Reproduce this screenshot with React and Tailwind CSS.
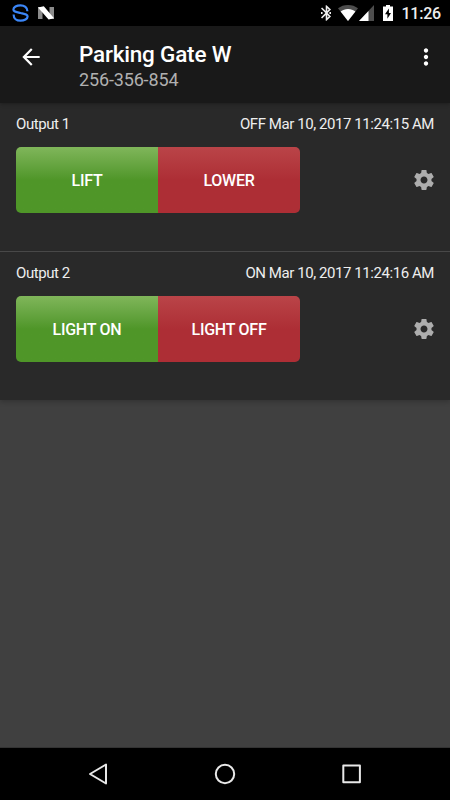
const outputs = [
  { name: "Output 1", status: "OFF Mar 10, 2017 11:24:15 AM", on: "LIFT", off: "LOWER" },
  { name: "Output 2", status: "ON Mar 10, 2017 11:24:16 AM", on: "LIGHT ON", off: "LIGHT OFF" },
];

function StatusBar() {
  return (
    <div className="flex h-[26px] shrink-0 items-center justify-between bg-black pr-[9px] pl-[12px]">
      <div className="flex items-center gap-[9px]">
        <svg viewBox="0 0 17 18" className="h-[18px] w-[17px]" fill="none" stroke="#3b86f7" strokeWidth="2.200">
          <path d="M15.400 7.200C15.400 3.600 12.400 1.300 8.500 1.300C4.600 1.300 1.400 3.200 1.400 5.600C1.400 7.600 4 7.900 8.500 9C13 10.100 15.600 10.400 15.600 12.400C15.600 14.800 12.400 16.700 8.500 16.700C4.600 16.700 1.600 14.400 1.600 10.400" />
        </svg>
        <svg viewBox="0 0 16 14" className="h-[14px] w-4">
          <path d="M0 1h4.500v12H0zM11.500 1H16v12h-4.500z" fill="#8b8b8b" />
          <path d="M0 1.400 5.800.3 16 12.200l-5.400 1.400z" fill="#fff" />
        </svg>
      </div>
      <div className="flex items-center">
        <svg viewBox="5 2 12.710 20" className="mr-[7px] h-[16px] w-[10px]" fill="#eee">
          <path d="M17.710 7.710 12 2h-1v7.590L6.410 5 5 6.410 10.590 12 5 17.590 6.410 19 11 14.410V22h1l5.710-5.710-4.300-4.290 4.300-4.290zM13 5.830l1.880 1.880L13 9.590V5.830zm1.880 10.460L13 18.170v-3.760l1.880 1.880z" />
          <path d="M5 10.700h2v2.600H5zM15.700 10.700h2v2.600h-2z" />
        </svg>
        <svg viewBox="0 0 20 16" className="mr-[1px] h-4 w-5">
          <path d="M10 16 0 3.300C2.700 1.200 6.200 0 10 0s7.300 1.200 10 3.300z" fill="#4d4d4d" />
          <path d="M10 16 2.600 6.600C4.700 5 7.200 4 10 4s5.300 1 7.400 2.600z" fill="#fff" />
        </svg>
        <svg viewBox="0 0 15 16" className="mr-[9px] h-4 w-[15px]">
          <path d="M0 16 15 0v16z" fill="#4d4d4d" />
          <path d="M0 16 9.500 5.900V16z" fill="#fff" />
        </svg>
        <svg viewBox="0 0 10 16" className="mr-[8px] h-4 w-[10px]">
          <path d="M3 0h4v1.500h3V16H0V1.500h3z" fill="#fff" />
          <path d="M5.900 3.500 2 9.300h2.400v4.500L8 7.900H5.900z" fill="#000" />
        </svg>
        <span className="pt-[2px] text-[16px] leading-none font-medium tracking-[-0.2px] text-[#eee]">11:26</span>
      </div>
    </div>
  );
}

function AppBar() {
  return (
    <header className="z-10 flex h-[77px] shrink-0 bg-[#191919] shadow-[0_1px_4px_rgba(0,0,0,0.3)]">
      <svg viewBox="0 0 24 24" className="mt-[18px] ml-[18px] h-[26px] w-[26px]" fill="#fff">
        <path d="M20 11H7.830l5.590-5.590L12 4l-8 8 8 8 1.410-1.410L7.830 13H20v-2z" />
      </svg>
      <div className="mt-[14px] ml-[35px] flex-1">
        <h1 className="text-[22.500px] leading-[28px] font-medium tracking-[-0.2px] text-white">Parking Gate W</h1>
        <p className="text-[18px] leading-[24px] tracking-[-0.15px] text-[#b0b0b0]">256-356-854</p>
      </div>
      <svg viewBox="0 0 24 24" className="mt-[18px] mr-[11px] h-[26px] w-[26px]" fill="#fff">
        <path d="M12 8c1.100 0 2-.9 2-2s-.9-2-2-2-2 .9-2 2 .9 2 2 2zm0 2c-1.100 0-2 .9-2 2s.9 2 2 2 2-.9 2-2-.9-2-2-2zm0 6c-1.100 0-2 .9-2 2s.9 2 2 2 2-.9 2-2-.9-2-2-2z" />
      </svg>
    </header>
  );
}

function OutputRow({ output }) {
  return (
    <section className="h-[149px] border-b border-[#484848] px-4 pt-[11px] last:border-b-0">
      <div className="flex justify-between text-[15px] leading-5 tracking-[-0.43px] text-[#eee]">
        <span>{output.name}</span>
        <span>{output.status}</span>
      </div>
      <div className="mt-[13px] flex items-center justify-between">
        <div className="flex h-[66px] w-[284px] overflow-hidden rounded-[5px] text-[16px] font-medium tracking-[-0.25px] text-white">
          <button type="button" className="flex-1 bg-linear-to-b from-[#80b65a] via-[#4f9628] via-50% to-[#4f9628] pt-[2px]">
            {output.on}
          </button>
          <button type="button" className="flex-1 bg-linear-to-b from-[#ba4448] via-[#ad2e35] via-50% to-[#ad2e35] pt-[2px]">
            {output.off}
          </button>
        </div>
        <svg viewBox="0 0 24 24" className="-mr-[2px] mb-px h-6 w-6" fill="#adadad">
          <path d="M19.430 12.980c.04-.32.07-.64.07-.98s-.03-.66-.07-.98l2.110-1.650c.19-.15.24-.42.12-.64l-2-3.460c-.12-.22-.39-.3-.61-.22l-2.490 1c-.52-.4-1.080-.73-1.690-.98l-.38-2.650C14.460 2.180 14.250 2 14 2h-4c-.25 0-.46.18-.49.42l-.38 2.650c-.61.25-1.170.59-1.690.98l-2.490-1c-.23-.09-.49 0-.61.22l-2 3.460c-.13.22-.07.49.12.64l2.110 1.650c-.04.32-.07.65-.07.98s.03.66.07.98l-2.110 1.650c-.19.15-.24.42-.12.64l2 3.460c.12.22.39.3.61.22l2.490-1c.52.4 1.080.73 1.690.98l.38 2.650c.03.24.24.42.49.42h4c.25 0 .46-.18.49-.42l.38-2.650c.61-.25 1.170-.59 1.690-.98l2.490 1c.23.09.49 0 .61-.22l2-3.460c.12-.22.07-.49-.12-.64l-2.110-1.650zM12 15.500c-1.930 0-3.500-1.570-3.500-3.500s1.570-3.500 3.500-3.500 3.500 1.570 3.500 3.500-1.570 3.500-3.500 3.500z" />
        </svg>
      </div>
    </section>
  );
}

function NavBar() {
  return (
    <nav className="flex h-[52px] shrink-0 items-center justify-between bg-black pr-[88px] pl-[88px]">
      <svg viewBox="0 0 20 22" className="h-[22px] w-5" fill="none" stroke="#e8e8e8" strokeWidth="2" strokeLinejoin="round">
        <path d="M2 11 18 1.500v19z" />
      </svg>
      <svg viewBox="0 0 22 22" className="h-[22px] w-[22px]" fill="none" stroke="#e8e8e8" strokeWidth="2">
        <circle cx="11" cy="11" r="9.200" />
      </svg>
      <svg viewBox="0 0 20 20" className="h-5 w-5" fill="none" stroke="#e8e8e8" strokeWidth="2" strokeLinejoin="round">
        <path d="M1.300 1.600h16.600v16.600H1.300z" />
      </svg>
    </nav>
  );
}

export default function App() {
  return (
    <div className="flex h-[800px] w-[450px] flex-col overflow-hidden bg-[#404040] font-['Roboto',sans-serif]">
      <StatusBar />
      <AppBar />
      <main className="h-[297px] shrink-0 bg-[#292929] shadow-[0_2px_5px_rgba(0,0,0,0.22)]">
        {outputs.map((output) => (
          <OutputRow key={output.name} output={output} />
        ))}
      </main>
      <div className="flex-1 border-b border-[#333]" />
      <NavBar />
    </div>
  );
}
